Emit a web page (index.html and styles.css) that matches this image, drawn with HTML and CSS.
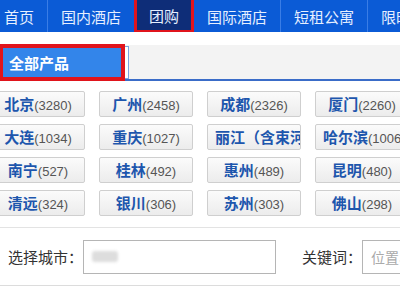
FILE: index.html
```html
<!DOCTYPE html>
<html lang="zh">
<head>
    <meta charset="UTF-8">
    <title>团购</title>
    <link rel="stylesheet" href="styles.css">
</head>
<body>
    <nav class="topnav">
        <a class="first">首页</a>
        <a>国内酒店</a>
        <a class="active">团购</a>
        <a>国际酒店</a>
        <a>短租公寓</a>
        <a>限时抢购</a>
    </nav>

    <div class="tabbar">
        <div class="tab">全部产品</div>
    </div>

    <div class="cities">
        <a class="city"><b>北京</b>(3280)</a>
        <a class="city"><b>广州</b>(2458)</a>
        <a class="city"><b>成都</b>(2326)</a>
        <a class="city"><b>厦门</b>(2260)</a>
        <a class="city"><b>大连</b>(1034)</a>
        <a class="city"><b>重庆</b>(1027)</a>
        <a class="city"><b>丽江（含束河）</b>(986)</a>
        <a class="city"><b>哈尔滨</b>(1006)</a>
        <a class="city"><b>南宁</b>(527)</a>
        <a class="city"><b>桂林</b>(492)</a>
        <a class="city"><b>惠州</b>(489)</a>
        <a class="city"><b>昆明</b>(480)</a>
        <a class="city"><b>清远</b>(324)</a>
        <a class="city"><b>银川</b>(306)</a>
        <a class="city"><b>苏州</b>(303)</a>
        <a class="city"><b>佛山</b>(298)</a>
    </div>

    <div class="search">
        <label>选择城市：</label>
        <div class="input city-input"><span class="blur"></span></div>
        <label class="kw">关键词：</label>
        <div class="input kw-input">位置、酒店名</div>
    </div>
</body>
</html>
```

FILE: styles.css
```css
body {
    margin: 0;
    width: 400px;
    height: 288px;
    overflow: hidden;
    background-color: #fff;
    font-family: "Noto Sans CJK SC", "Liberation Sans", sans-serif;
    color: #333;
}

.topnav {
    display: flex;
    height: 32px;
    background-color: #0b5bd6;
    white-space: nowrap;
    overflow: hidden;
}

.topnav a {
    display: flex;
    align-items: center;
    padding: 0 13px;
    font-size: 15px;
    color: #e6efff;
    border-right: 1px solid #3a7de6;
    line-height: 1;
}

.topnav a.first {
    padding-left: 4px;
}

.topnav a.active {
    width: 30px;
    padding: 0 12px;
    justify-content: center;
    background-color: #0e2d78;
    border: 3px solid #e0141c;
    border-top: 0;
    margin-left: -1px;
    height: 30px;
}

.tabbar {
    margin-top: 13px;
    height: 34px;
    background-color: #f3f3f3;
    border-bottom: 2px solid #3a6cc8;
    display: flex;
}

.tab {
    width: 112px;
    height: 29px;
    margin-top: -1px;
    padding-left: 6px;
    background-color: #3385ea;
    border: 4px solid #e0141c;
    border-left-width: 3px;
    color: #fff;
    font-weight: bold;
    font-size: 15px;
    line-height: 29px;
    box-shadow: 6px 0 0 -3px #fff, 6px 0 0 -2px #7aa3e0;
}

.cities {
    display: grid;
    grid-template-columns: repeat(4, 94px);
    grid-auto-rows: 26px;
    column-gap: 14px;
    row-gap: 7px;
    margin: 10px 0 0 -9px;
    padding-bottom: 11px;
    border-bottom: 1px solid #e3e3e3;
}

.city {
    display: block;
    padding: 0 7px;
    border: 1px solid #cfcfcf;
    border-radius: 2px;
    background: linear-gradient(#fbfbfb, #ececec);
    text-align: center;
    white-space: nowrap;
    overflow: hidden;
    line-height: 24px;
    font-family: "Liberation Sans", sans-serif;
    font-size: 13px;
    color: #555;
}

.city b {
    font-family: "Noto Sans CJK SC", sans-serif;
    font-size: 15px;
    color: #1d56ad;
}

.search {
    display: flex;
    align-items: center;
    height: 57px;
    padding-left: 8px;
    border-bottom: 1px solid #dcdcdc;
    white-space: nowrap;
}

.search label {
    font-size: 15px;
    color: #333;
    width: 76px;
}

.search label.kw {
    width: 63px;
    margin-left: 26px;
}

.input {
    box-sizing: border-box;
    height: 34px;
    border: 1px solid #b5b5b5;
    font-size: 14px;
    color: #aaa;
    line-height: 32px;
    padding-left: 8px;
    flex-shrink: 0;
}

.city-input {
    width: 193px;
    display: flex;
    align-items: center;
}

.kw-input {
    width: 120px;
}

.blur {
    display: block;
    width: 26px;
    height: 11px;
    background-color: #ddd;
    border-radius: 3px;
    filter: blur(1.5px);
}
```
